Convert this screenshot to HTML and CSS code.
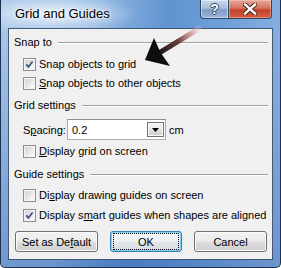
FILE: index.html
```html
<!DOCTYPE html>
<html>
<head>
<meta charset="utf-8">
<link rel="stylesheet" href="styles.css">
</head>
<body>
<div class="window">
  <div class="titlebar">
    <span class="title">Grid and Guides</span>
    <div class="caption-btns">
      <div class="cap-btn help"><span>?</span></div>
      <div class="cap-btn close">
        <svg width="14" height="12" viewBox="0 0 14 12">
          <path d="M2 1.5 L12 10.5 M12 1.5 L2 10.5" stroke="#3b1a14" stroke-width="4.2" stroke-linecap="square" fill="none"/>
          <path d="M2 1.5 L12 10.5 M12 1.5 L2 10.5" stroke="#ffffff" stroke-width="2.4" stroke-linecap="square" fill="none"/>
        </svg>
      </div>
    </div>
  </div>
  <div class="client">
    <div class="group-head g1"><span>Snap to</span><div class="rule"></div></div>
    <div class="check r1">
      <svg class="cb" width="13" height="13" viewBox="0 0 13 13"><rect x="0.5" y="0.5" width="12" height="12" fill="#f4f4f4" stroke="#8e8f8f"/><rect x="2" y="2" width="9" height="9" fill="url(#cbg)"/><path d="M3.3 6.4 L5.4 8.9 L9.6 3.4" stroke="#3a4f86" stroke-width="1.7" fill="none"/></svg>
      <span>Snap objects to <u>g</u>rid</span>
    </div>
    <div class="check r2">
      <svg class="cb" width="13" height="13" viewBox="0 0 13 13"><rect x="0.5" y="0.5" width="12" height="12" fill="#f4f4f4" stroke="#8e8f8f"/><rect x="2" y="2" width="9" height="9" fill="url(#cbg)"/></svg>
      <span><u>S</u>nap objects to other objects</span>
    </div>

    <div class="group-head g2"><span>Grid settings</span><div class="rule"></div></div>
    <div class="spacing-row">
      <span class="lbl">S<u>p</u>acing:</span>
      <div class="combo"><span class="val">0.2</span><div class="drop"><svg width="7" height="4" viewBox="0 0 7 4"><path d="M0 0 H7 L3.5 4 Z" fill="#000"/></svg></div></div>
      <span class="unit">cm</span>
    </div>
    <div class="check r3">
      <svg class="cb" width="13" height="13" viewBox="0 0 13 13"><rect x="0.5" y="0.5" width="12" height="12" fill="#f4f4f4" stroke="#8e8f8f"/><rect x="2" y="2" width="9" height="9" fill="url(#cbg)"/></svg>
      <span><u>D</u>isplay grid on screen</span>
    </div>

    <div class="group-head g3"><span>Guide settings</span><div class="rule"></div></div>
    <div class="check r4">
      <svg class="cb" width="13" height="13" viewBox="0 0 13 13"><rect x="0.5" y="0.5" width="12" height="12" fill="#f4f4f4" stroke="#8e8f8f"/><rect x="2" y="2" width="9" height="9" fill="url(#cbg)"/></svg>
      <span>Di<u>s</u>play drawing guides on screen</span>
    </div>
    <div class="check r5">
      <svg class="cb" width="13" height="13" viewBox="0 0 13 13"><rect x="0.5" y="0.5" width="12" height="12" fill="#f4f4f4" stroke="#8e8f8f"/><rect x="2" y="2" width="9" height="9" fill="url(#cbg)"/><path d="M3.3 6.4 L5.4 8.9 L9.6 3.4" stroke="#3a4f86" stroke-width="1.7" fill="none"/></svg>
      <span>Display s<u>m</u>art guides when shapes are aligned</span>
    </div>

    <div class="buttons">
      <div class="btn w1">Set as De<u>f</u>ault</div>
      <div class="btn w2 default"><span class="focus">OK</span></div>
      <div class="btn w3">Cancel</div>
    </div>
  </div>

  <svg class="arrow" width="66" height="46" viewBox="140 25 66 46">
    <defs>
      <linearGradient id="shaft" x1="160" y1="53" x2="200" y2="28" gradientUnits="userSpaceOnUse">
        <stop offset="0" stop-color="#1a1a1a"/>
        <stop offset="0.45" stop-color="#6a3a3a"/>
        <stop offset="0.8" stop-color="#d49a9a" stop-opacity="0.8"/>
        <stop offset="1" stop-color="#f0d0d0" stop-opacity="0.2"/>
      </linearGradient>
    </defs>
    <path d="M159 53 L200 28" stroke="url(#shaft)" stroke-width="5" stroke-linecap="round" fill="none"/>
    <path d="M145 60 L154 38 L160.5 52.5 L170 66 Z" fill="#0d0d0d"/>
  </svg>

  <svg width="0" height="0" class="defs">
    <defs>
      <linearGradient id="cbg" x1="0" y1="0" x2="1" y2="1">
        <stop offset="0" stop-color="#d3d3d3"/>
        <stop offset="1" stop-color="#fbfbfb"/>
      </linearGradient>
    </defs>
  </svg>
</div>
</body>
</html>
```

FILE: styles.css
```css
html, body {
  margin: 0;
  padding: 0;
  background: #ffffff;
}

.window {
  position: relative;
  box-sizing: border-box;
  width: 281px;
  height: 268px;
  border: 1px solid #1d3252;
  border-top: none;
  border-radius: 0 0 5px 5px;
  padding: 0 7px 7px 7px;
  display: flex;
  flex-direction: column;
  font-family: "Liberation Sans", Arial, sans-serif;
  font-size: 11px;
  color: #000;
  background:
    radial-gradient(ellipse 85px 20px at 52px 14px, rgba(255,255,255,0.8), rgba(255,255,255,0) 100%),
    linear-gradient(to bottom, rgba(0,0,0,0) 30px, rgba(30,80,160,0.35) 100%),
    linear-gradient(100deg, #a9c7e8 0%, #93b9e3 30%, #5f94d1 52%, #6f9fd8 70%, #98bbe4 100%);
}

.titlebar {
  position: relative;
  height: 28px;
  flex: none;
}

.title {
  position: absolute;
  left: 7px;
  top: 6px;
  font-size: 13px;
  line-height: 16px;
  color: #000;
  text-shadow: 0 0 6px rgba(255,255,255,0.9), 0 0 3px rgba(255,255,255,0.9);
}

.caption-btns {
  position: absolute;
  right: 1px;
  top: 0;
  display: flex;
}

.cap-btn {
  box-sizing: border-box;
  height: 19px;
  border: 1px solid #2f4766;
  border-top: none;
  display: flex;
  align-items: center;
  justify-content: center;
}

.cap-btn.help {
  width: 28px;
  border-radius: 0 0 0 4px;
  border-right: none;
  background: linear-gradient(to bottom, #c9d9ec 0%, #a9bfdb 45%, #7f9cc4 55%, #9cb6d8 100%);
  box-shadow: inset 0 0 0 1px rgba(255,255,255,0.45);
}

.cap-btn.help span {
  font-family: "Liberation Sans", Arial, sans-serif;
  font-weight: bold;
  font-size: 14px;
  color: #fff;
  line-height: 14px;
  text-shadow: 1px 0 0 #2f4766, -1px 0 0 #2f4766, 0 1px 0 #2f4766, 0 -1px 0 #2f4766;
}

.cap-btn.close {
  width: 44px;
  border-radius: 0 0 4px 0;
  background: linear-gradient(to bottom, #e5a898 0%, #d4745f 45%, #c4402a 55%, #d65e3e 100%);
  box-shadow: inset 0 0 0 1px rgba(255,220,210,0.4);
}

.client {
  box-sizing: border-box;
  width: 265px;
  height: 232px;
  background: #f0f0f0;
  border: 1px solid #42597a;
  padding: 6px 4px 0 5px;
  display: flex;
  flex-direction: column;
}

.group-head {
  height: 14px;
  display: flex;
  align-items: center;
}

.group-head .rule {
  flex: 1;
  margin-left: 6px;
  height: 0;
  border-top: 1px solid #a0a0a0;
  border-bottom: 1px solid #ffffff;
  margin-top: 1px;
}

.g2 { margin-top: 6px; }
.g3 { margin-top: 7px; }

.check {
  height: 18px;
  margin-left: 9px;
  display: flex;
  align-items: center;
}

.check .cb {
  flex: none;
  margin-right: 3px;
}

.r1 { margin-top: 6px; }
.r2 { margin-top: 1px; }
.r3 { margin-top: 2px; }
.r4 { margin-top: 5px; }
.r5 { margin-top: 2px; }

.spacing-row {
  margin-top: 7px;
  margin-left: 9px;
  height: 21px;
  display: flex;
  align-items: center;
}

.spacing-row .lbl {
  width: 44px;
}

.combo {
  box-sizing: border-box;
  width: 99px;
  height: 21px;
  border: 1px solid #abadb3;
  border-top-color: #8e8f8f;
  background: #fff;
  display: flex;
  align-items: center;
  justify-content: space-between;
  padding: 0 1px 0 4px;
}

.drop {
  box-sizing: border-box;
  width: 17px;
  height: 15px;
  border: 1px solid #707070;
  background: linear-gradient(to bottom, #f2f2f2 0%, #ebebeb 50%, #dddddd 51%, #cfcfcf 100%);
  box-shadow: inset 0 0 0 1px #fcfcfc;
  display: flex;
  align-items: center;
  justify-content: center;
}

.unit {
  margin-left: 3px;
}

.buttons {
  margin-top: 7px;
  margin-left: 1px;
  display: flex;
  gap: 12px;
}

.btn {
  box-sizing: border-box;
  height: 21px;
  border: 1px solid #707070;
  border-radius: 3px;
  background: linear-gradient(to bottom, #f2f2f2 0%, #ebebeb 48%, #dddddd 52%, #cfcfcf 100%);
  box-shadow: inset 0 0 0 1px #fbfbfb;
  display: flex;
  align-items: center;
  justify-content: center;
}

.w1 { width: 83px; }
.w2 { width: 72px; }
.w3 { width: 73px; }

.btn.default {
  border-color: #3c7fb1;
  box-shadow: inset 0 0 0 1px #7fd0f4;
  background: linear-gradient(to bottom, #f6f9fb 0%, #eef2f5 48%, #e0e6ea 52%, #d6dde2 100%);
}

.btn .focus {
  box-sizing: border-box;
  width: 64px;
  height: 15px;
  outline: 1px dotted #000;
  display: flex;
  align-items: center;
  justify-content: center;
}

.arrow {
  position: absolute;
  left: 139px;
  top: 25px;
  pointer-events: none;
}

.defs {
  position: absolute;
  width: 0;
  height: 0;
}
```
